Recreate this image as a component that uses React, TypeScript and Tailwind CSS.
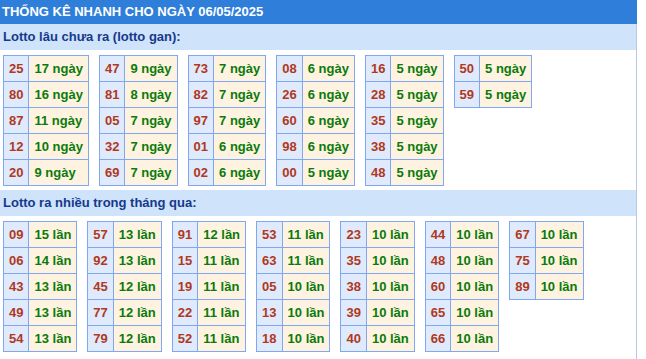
import React from "react";

const gan: [string, string][][] = [
  [["25", "17"], ["80", "16"], ["87", "11"], ["12", "10"], ["20", "9"]],
  [["47", "9"], ["81", "8"], ["05", "7"], ["32", "7"], ["69", "7"]],
  [["73", "7"], ["82", "7"], ["97", "7"], ["01", "6"], ["02", "6"]],
  [["08", "6"], ["26", "6"], ["60", "6"], ["98", "6"], ["00", "5"]],
  [["16", "5"], ["28", "5"], ["35", "5"], ["38", "5"], ["48", "5"]],
  [["50", "5"], ["59", "5"]],
];

const nhieu: [string, string][][] = [
  [["09", "15"], ["06", "14"], ["43", "13"], ["49", "13"], ["54", "13"]],
  [["57", "13"], ["92", "13"], ["45", "12"], ["77", "12"], ["79", "12"]],
  [["91", "12"], ["15", "11"], ["19", "11"], ["22", "11"], ["52", "11"]],
  [["53", "11"], ["63", "11"], ["05", "10"], ["13", "10"], ["18", "10"]],
  [["23", "10"], ["35", "10"], ["38", "10"], ["39", "10"], ["40", "10"]],
  [["44", "10"], ["48", "10"], ["60", "10"], ["65", "10"], ["66", "10"]],
  [["67", "10"], ["75", "10"], ["89", "10"]],
];

function NumTable({ rows, unit }: { rows: [string, string][]; unit: string }) {
  return (
    <table className="border-collapse self-start">
      <tbody>
        {rows.map(([n, c], i) => (
          <tr key={i}>
            <td className="border border-[#80a8f0] bg-[#dfeafc] px-[5px] py-[5px] leading-[15px] text-center text-[#b0381c]">
              {n}
            </td>
            <td className="border border-[#80a8f0] bg-[#fef3e0] px-[5px] py-[5px] leading-[15px] text-left text-[#0b7a0b] whitespace-nowrap">
              {c} {unit}
            </td>
          </tr>
        ))}
      </tbody>
    </table>
  );
}

function Section({ title, groups, unit }: { title: string; groups: [string, string][][]; unit: string }) {
  return (
    <div>
      <div className="h-[26px] leading-[26px] bg-[#cfe3fa] pl-[3px] text-[#15398c]">{title}</div>
      <div className="flex flex-wrap gap-x-[10px] pl-[3px] pt-[5px] pb-[4px]">
        {groups.map((g, i) => (
          <NumTable key={i} rows={g} unit={unit} />
        ))}
      </div>
    </div>
  );
}

export default function App() {
  return (
    <div
      className="w-[637px] min-h-[359px] bg-white text-[13px] font-bold flex flex-col"
      style={{ fontFamily: '"Liberation Sans", Arial, sans-serif' }}
    >
      <div className="h-[24px] leading-[24px] bg-[#2f7fda] text-white pl-[2px]">
        THỐNG KÊ NHANH CHO NGÀY 06/05/2025
      </div>
      <div className="flex-1 border-r border-[#b6cae6]">
        <Section title="Lotto lâu chưa ra (lotto gan):" groups={gan} unit="ngày" />
        <Section title="Lotto ra nhiều trong tháng qua:" groups={nhieu} unit="lần" />
      </div>
    </div>
  );
}
